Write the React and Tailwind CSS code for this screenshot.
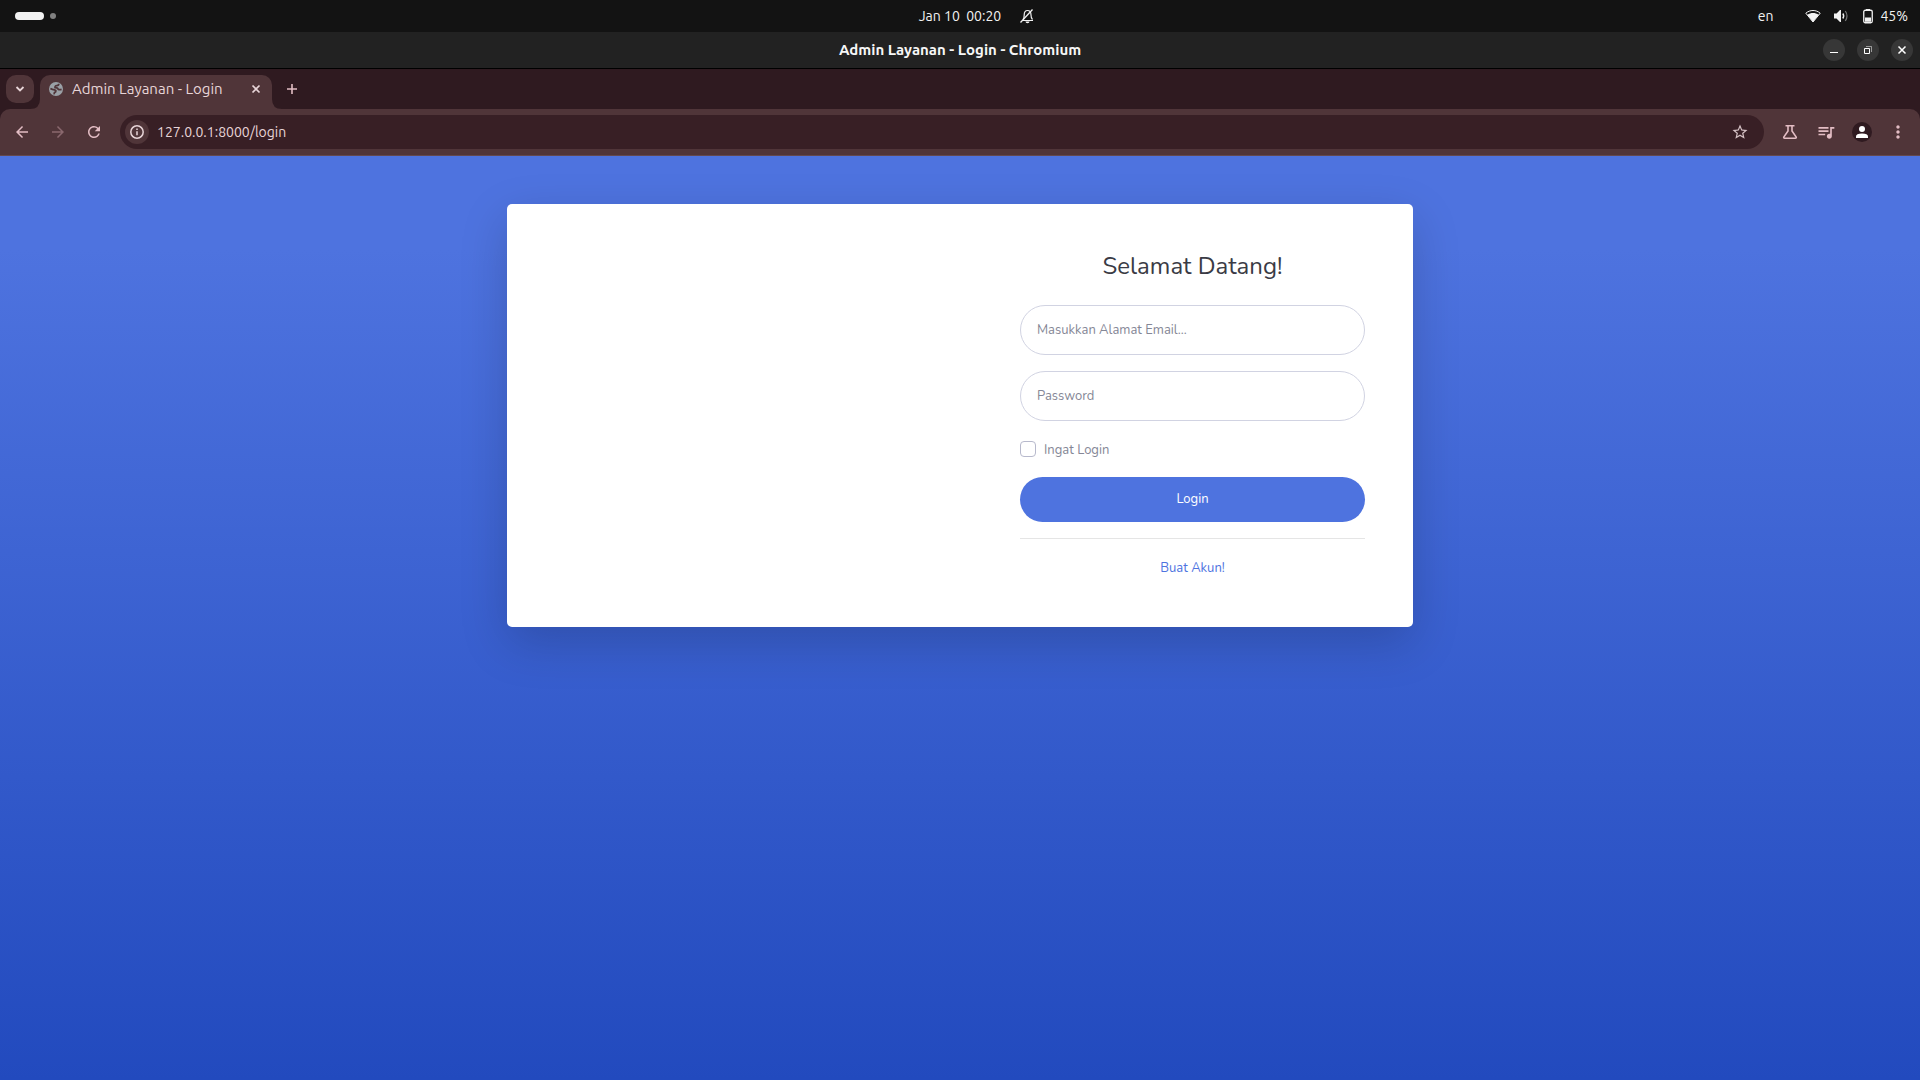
import {
  MdArrowBack,
  MdArrowForward,
  MdMoreVert,
  MdQueueMusic,
  MdRefresh,
  MdStarBorder,
} from "react-icons/md";

function GlobeIcon() {
  return (
    <svg width="14" height="14" viewBox="0 0 14 14" fill="none">
      <circle cx="7" cy="7" r="7" fill="#9aa0a6" />
      <path d="M9.800 1.800Q9.800 3.600 7.800 3.700Q5.600 3.900 6 5.700Q8.800 5.800 9.200 7.300Q10.200 8 12.600 7.400" stroke="#503539" strokeWidth="1.700" />
      <path d="M1.400 6.500Q3.200 7.700 5.400 7.800Q7.600 8.200 6.600 9.900Q5 10.200 5.200 12.400" stroke="#503539" strokeWidth="1.700" />
    </svg>
  );
}

function BellOffIcon() {
  return (
    <svg width="16" height="16" viewBox="0 0 16 16" fill="none" stroke="currentColor">
      <path d="M3 12.5h11M4 11.5c1-1 1.200-2 1.200-4.500C5.200 4 6.500 2.500 8.500 2.500S12 4 12 7c0 2.500.3 3.500 1.500 4.500" strokeWidth="1.200" />
      <path d="M1.500 14.500 13.500 1.500" strokeWidth="1.300" />
      <path d="M6.500 13.500h4a2 1.800 0 0 1-4 0z" fill="currentColor" stroke="none" />
    </svg>
  );
}

function WifiIcon() {
  return (
    <svg width="16" height="16" viewBox="0 0 16 16" fill="none" stroke="currentColor">
      <path d="M.8 5.200C5 1.600 11 1.600 15.200 5.200L8 14z" strokeWidth="1" />
      <path d="M2.300 6.800C6 4.500 10 4.500 13.700 6.800L8 14z" fill="currentColor" stroke="none" />
    </svg>
  );
}

function VolumeIcon() {
  return (
    <svg width="16" height="16" viewBox="0 0 16 16" fill="none" stroke="currentColor">
      <path d="M1 5.500h2.500L7 2h1v12H7L3.500 10.500H1z" fill="currentColor" stroke="none" />
      <path d="M9.800 5.500q1.800 2.500 0 5" strokeWidth="1.400" />
      <path d="M12.300 3q3.400 5 0 10" strokeWidth="1.200" opacity="0.45" />
    </svg>
  );
}

function BatteryIcon() {
  return (
    <svg width="10" height="16" viewBox="0 0 10 16" fill="none" stroke="currentColor">
      <rect x=".75" y="2.250" width="8.500" height="12.500" rx="1.500" strokeWidth="1.300" />
      <path d="M3 1h4v1H3z" fill="currentColor" stroke="none" />
      <path d="M2 9.500h6v4.300H2z" fill="currentColor" stroke="none" />
    </svg>
  );
}

function FlaskIcon() {
  return (
    <svg width="16" height="16" viewBox="0 0 16 16" fill="none" stroke="currentColor" strokeWidth="1.600">
      <path d="M3.500 1.800h9M6 2v5L1.800 13q-.4 1.200.8 1.200h10.800q1.200 0 .8-1.200L10 7V2" />
    </svg>
  );
}

function SystemBar() {
  return (
    <header className="grid h-8 grid-cols-[1fr_auto_1fr] items-center bg-[#131313] px-3 text-sm text-[#f2f2f2]">
      <button type="button" aria-label="Activities" className="flex items-center gap-1.5 pl-[3px]">
        <span className="h-2 w-[29px] rounded-full bg-[#f2f2f2]" />
        <span className="size-1.5 rounded-full bg-[#808080]" />
      </button>
      <button type="button" className="flex items-center whitespace-pre">
        <span className="w-[34px]" />
        <span>Jan 10  00:20</span>
        <span className="flex w-[34px] justify-end">
          <BellOffIcon />
        </span>
      </button>
      <div className="flex items-center justify-end">
        <button type="button" className="mr-8">en</button>
        <button type="button" aria-label="System menu, battery 45%" className="flex items-center">
          <WifiIcon />
          <span className="ml-3 flex"><VolumeIcon /></span>
          <span className="ml-3.5 flex"><BatteryIcon /></span>
          <span className="ml-[7px]">45%</span>
        </button>
      </div>
    </header>
  );
}

const windowButton = "flex size-[22px] items-center justify-center rounded-full bg-[#373737]";

function TitleBar() {
  return (
    <div className="grid h-[37px] grid-cols-[1fr_auto_1fr] items-center border-b border-black bg-[#222222] px-[7px] text-white">
      <span />
      <h1 className="text-[15px] font-bold text-[#f7f7f7]">Admin Layanan - Login - Chromium</h1>
      <div className="flex justify-end gap-3">
        <button type="button" aria-label="Minimize" className={windowButton}>
          <svg width="10" height="10" viewBox="0 0 10 10"><path d="M1 7h8v1H1z" fill="currentColor" /></svg>
        </button>
        <button type="button" aria-label="Restore" className={windowButton}>
          <svg width="10" height="10" viewBox="0 0 10 10" fill="none" stroke="currentColor">
            <path d="M1.500 3.500h5v5h-5z" />
            <path d="M3 1.500h5.500V7" opacity="0.5" />
          </svg>
        </button>
        <button type="button" aria-label="Close window" className={windowButton}>
          <svg width="10" height="10" viewBox="0 0 10 10" stroke="currentColor" strokeWidth="1.500"><path d="m1.500 1.500 7 7m0-7-7 7" /></svg>
        </button>
      </div>
    </div>
  );
}

function TabStrip() {
  return (
    <div className="flex h-10 items-start bg-[#2f1a20] pt-1.5 pl-1.5 text-[#e8d5d8]">
      <button type="button" aria-label="Search tabs" className="flex size-7 items-center justify-center rounded-[10px] bg-[#503539]">
        <svg width="10" height="10" viewBox="0 0 10 10" fill="none" stroke="currentColor" strokeWidth="1.800"><path d="m1.500 3 3.500 3.500L8.500 3" /></svg>
      </button>
      <div className="relative ml-1.5 flex h-[34px] w-58 items-center rounded-t-[10px] bg-[#503539] pr-2.5 pb-1.5 pl-[9px]">
        <svg className="absolute bottom-0 -left-2.5 text-[#503539]" width="10" height="10" viewBox="0 0 10 10"><path d="M10 0v10H0Q10 10 10 0z" fill="currentColor" /></svg>
        <svg className="absolute -right-2.5 bottom-0 text-[#503539]" width="10" height="10" viewBox="0 0 10 10"><path d="M0 0v10h10Q0 10 0 0z" fill="currentColor" /></svg>
        <GlobeIcon />
        <span className="ml-[9px] flex-1 text-[15px]">Admin Layanan - Login</span>
        <button type="button" aria-label="Close tab" className="flex size-3 items-center justify-center">
          <svg width="10" height="10" viewBox="0 0 10 10" stroke="currentColor" strokeWidth="1.700"><path d="m1.500 1.500 7 7m0-7-7 7" /></svg>
        </button>
      </div>
      <button type="button" aria-label="New tab" className="ml-3 flex h-7 w-4 items-center justify-center text-[#e3bdc4]">
        <svg width="12" height="12" viewBox="0 0 12 12" stroke="currentColor" strokeWidth="1.600"><path d="M6 1v10M1 6h10" /></svg>
      </button>
    </div>
  );
}

const toolbarButton = "flex size-6 items-center justify-center";

function Toolbar() {
  return (
    <div className="bg-[#2f1a20]">
      <nav className="flex h-[47px] items-center rounded-t-[10px] border-b border-[#64494e] bg-[#503539] px-2.5 text-[#e3bdc4]">
        <div className="flex gap-3">
          <button type="button" aria-label="Back" className={toolbarButton}><MdArrowBack size={18} /></button>
          <button type="button" aria-label="Forward" disabled className="flex size-6 items-center justify-center text-[#8a686e]"><MdArrowForward size={18} /></button>
          <button type="button" aria-label="Reload" className={toolbarButton}><MdRefresh size={18} /></button>
        </div>
        <div className="ml-3.5 flex h-[34px] flex-1 items-center rounded-full bg-[#381f25] pr-3 pl-[5px]">
          <button type="button" aria-label="Site information" className="flex size-6 items-center justify-center rounded-full bg-[#503539] text-[#e8d5d8]">
            <svg width="14" height="14" viewBox="0 0 14 14" fill="none" stroke="currentColor" strokeWidth="1.500">
              <circle cx="7" cy="7" r="6.200" />
              <path d="M7 6.200v4M7 3.600v1.500" />
            </svg>
          </button>
          <input
            type="text"
            aria-label="Address"
            defaultValue="127.0.0.1:8000/login"
            className="ml-2 min-w-0 flex-1 bg-transparent text-sm text-[#e8d5d8] outline-none"
          />
          <button type="button" aria-label="Bookmark this page" className="flex size-6 items-center justify-center text-[#d6c2c5]"><MdStarBorder size={18} /></button>
        </div>
        <div className="ml-3.5 flex gap-3">
          <button type="button" aria-label="Labs" className={toolbarButton}><FlaskIcon /></button>
          <button type="button" aria-label="Media controls" className={toolbarButton}><MdQueueMusic size={20} /></button>
          <button type="button" aria-label="Profile" className={toolbarButton}>
            <svg width="20" height="20" viewBox="0 0 20 20">
              <circle cx="10" cy="10" r="10" fill="#2f1a20" />
              <circle cx="10" cy="7" r="3" fill="#fff" />
              <path d="M4 16v-1.500q0-3 6-3t6 3V16z" fill="#fff" />
            </svg>
          </button>
          <button type="button" aria-label="Menu" className={toolbarButton}><MdMoreVert size={20} /></button>
        </div>
      </nav>
    </div>
  );
}

const fieldClass =
  "block h-[50px] w-full rounded-full border border-[#d1d3e2] px-4 text-[13px] text-[#6e707e] placeholder:text-[#858796] focus:outline-none";

function LoginForm() {
  return (
    <div className="p-12">
      <h2 className="mb-6 text-center text-2xl leading-[29px] text-[#3a3b45]">Selamat Datang!</h2>
      <form onSubmit={(event) => event.preventDefault()}>
        <div className="grid gap-4">
          <input type="email" aria-label="Alamat Email" placeholder="Masukkan Alamat Email..." className={fieldClass} />
          <input type="password" aria-label="Password" placeholder="Password" className={fieldClass} />
        </div>
        <div className="mt-4 flex h-6 items-center gap-2">
          <input id="remember" type="checkbox" className="size-4 appearance-none rounded border border-[#b7b9cc] bg-white checked:bg-[#4e73df]" />
          <div className="leading-6">
            <label htmlFor="remember" className="text-[13px] text-[#858796]">Ingat Login</label>
          </div>
        </div>
        <button type="submit" className="mt-4 h-[45px] w-full rounded-full bg-[#4e73df] text-[13px] text-white">Login</button>
      </form>
      <hr className="my-4 border-black/10" />
      <div className="h-6 text-center leading-6">
        <a href="#register" className="text-[13px] text-[#4e73df]">Buat Akun!</a>
      </div>
    </div>
  );
}

export default function App() {
  return (
    <div className="flex min-h-screen flex-col font-['Ubuntu','Noto_Sans',sans-serif]">
      <SystemBar />
      <TitleBar />
      <TabStrip />
      <Toolbar />
      <main className="flex-1 bg-linear-[180deg,#4e73df_10%,#224abe_100%] px-3 py-12 font-['Nunito','Lato',sans-serif]">
        <section className="mx-auto grid max-w-[906px] grid-cols-[465fr_441fr] rounded-[5px] bg-white shadow-[0_16px_48px_rgba(0,0,0,0.175)]">
          <div />
          <LoginForm />
        </section>
      </main>
    </div>
  );
}
